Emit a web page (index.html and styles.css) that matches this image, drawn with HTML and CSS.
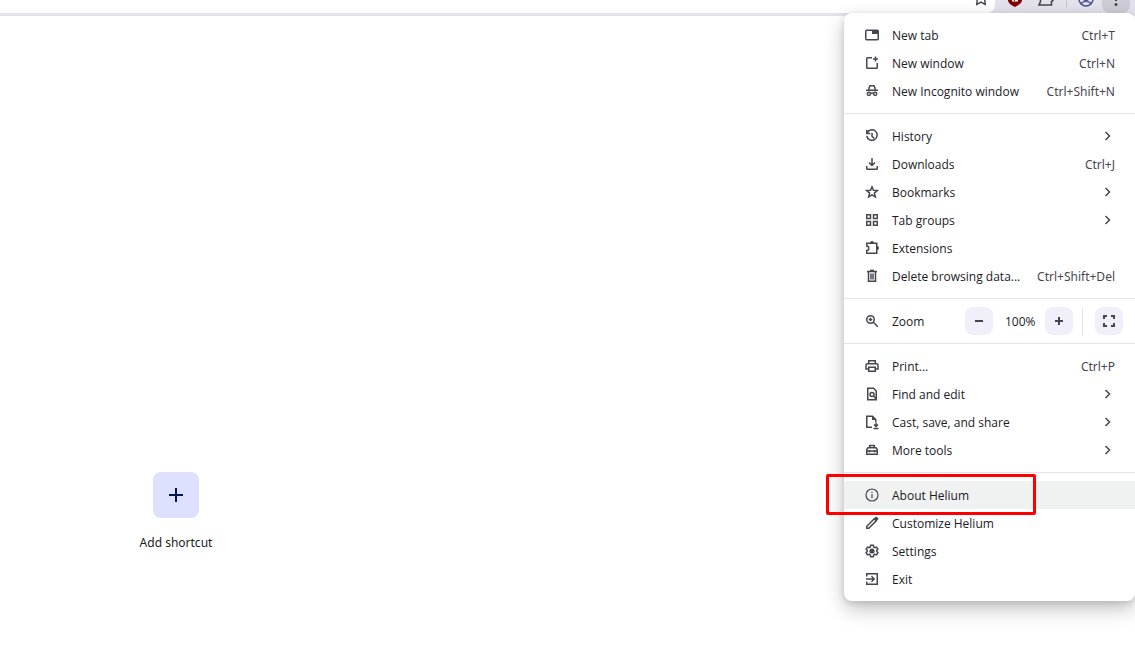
FILE: index.html
```html
<!DOCTYPE html>
<html lang="en">
<head>
    <meta charset="UTF-8">
    <meta name="viewport" content="width=device-width, initial-scale=1.0">
    <title>New Tab</title>
    <link rel="stylesheet" href="styles.css">
</head>
<body>

    <!-- Browser toolbar -->
    <header class="toolbar">
        <div class="address-bar">
            <button class="tool star" aria-label="Bookmark this tab">
                <svg width="14" height="16" viewBox="0 0 14 16"><path d="M3.200 0L2.800 4.300 7 2l4.200 2.300L10.800 0" fill="none" stroke="#46464f" stroke-width="1.500"/></svg>
            </button>
        </div>
        <div class="tools">
            <button class="tool blocker" aria-label="Content blocker">
                <svg width="16" height="16" viewBox="0 0 16 16"><path d="M1 0h14c0 3-3 5-7 7C4 5 1 3 1 0z" fill="#800000"/><path d="M5 0h2v1h1V0h3v1.500H5z" fill="#fff"/></svg>
            </button>
            <button class="tool" aria-label="Extensions">
                <svg width="18" height="16" viewBox="0 0 18 16"><path d="M3.500 0v1.500L2 5h12.500V1.500L16.500 0" fill="none" stroke="#46464f" stroke-width="1.600"/></svg>
            </button>
            <span class="tool-line"></span>
            <button class="tool" aria-label="Profile">
                <svg width="16" height="16" viewBox="0 0 16 16"><path d="M1 -1a7 7 0 0 0 14 0M3 3.500c3-2.800 7-2.800 10 0M5.500-1c1 2 4 2 5 0" fill="none" stroke="#4d4f8f" stroke-width="1.500"/></svg>
            </button>
            <button class="tool more" aria-label="Menu">
                <svg width="16" height="16" viewBox="0 0 16 16"><path d="M7 0h2v1H7z" fill="#46464f"/><circle cx="8" cy="4.500" r="1.500" fill="#46464f"/></svg>
            </button>
        </div>
    </header>

    <!-- New tab page -->
    <main class="page">
        <a class="shortcut" href="#">
            <span class="shortcut-tile">
                <svg width="24" height="24" viewBox="0 0 24 24"><path d="M12 5v14M5 12h14" stroke="#001452" stroke-width="2"/></svg>
            </span>
            <span>Add shortcut</span>
        </a>
    </main>

    <!-- App menu -->
    <nav class="menu">
        <button class="item">
            <svg class="icon" viewBox="0 0 16 16"><rect x="1.750" y="3.250" width="12.500" height="9.500" rx="1"/><path class="solid" d="M8 3h6v4H8z"/></svg>
            <span class="label">New tab</span><span class="keys">Ctrl+T</span>
        </button>
        <button class="item">
            <svg class="icon" viewBox="0 0 16 16"><path d="M8 2.750H3.500a.75.75 0 0 0-.75.75v9c0 .4.300.750.750.750h9c.4 0 .750-.3.750-.750V8M11.500 1.500v5M9 4h5"/></svg>
            <span class="label">New window</span><span class="keys">Ctrl+N</span>
        </button>
        <button class="item">
            <svg class="icon" viewBox="0 0 16 16"><path d="M2 7.250h12M5 7V5l1-2.250h4L11 5v2M6.500 10.500c.8-.6 2.200-.6 3 0"/><circle cx="4.900" cy="10.800" r="1.600"/><circle cx="11.100" cy="10.800" r="1.600"/></svg>
            <span class="label">New Incognito window</span><span class="keys">Ctrl+Shift+N</span>
        </button>

        <hr class="line">

        <button class="item">
            <svg class="icon" viewBox="0 0 16 16"><path d="M3 5.200A5.250 5.250 0 1 1 2.750 8M2.750 2v3.500h3.500M8 5v3.300l2.300 2.200"/></svg>
            <span class="label">History</span>
            <svg class="arrow" viewBox="0 0 14 14"><path d="M4.500 3l4 4-4 4"/></svg>
        </button>
        <button class="item">
            <svg class="icon" viewBox="0 0 16 16"><path d="M8 2v7M5 6.500l3 3 3-3M2.750 10v2.500c0 .4.300.750.750.750h9c.4 0 .750-.3.750-.750V10"/></svg>
            <span class="label">Downloads</span><span class="keys">Ctrl+J</span>
        </button>
        <button class="item">
            <svg class="icon" viewBox="0 0 16 16"><path d="M8 2.800l1.500 3.500 3.800.3-2.900 2.500.9 3.700L8 10.800l-3.300 2 .9-3.700-2.900-2.500 3.800-.3z"/></svg>
            <span class="label">Bookmarks</span>
            <svg class="arrow" viewBox="0 0 14 14"><path d="M4.500 3l4 4-4 4"/></svg>
        </button>
        <button class="item">
            <svg class="icon" viewBox="0 0 16 16"><path d="M2.750 2.750h3.750v3.750h-3.750zM9.500 2.750h3.750v3.750h-3.750zM2.750 9.500h3.750v3.750h-3.750zM9.500 9.500h3.750v3.750h-3.750z"/></svg>
            <span class="label">Tab groups</span>
            <svg class="arrow" viewBox="0 0 14 14"><path d="M4.500 3l4 4-4 4"/></svg>
        </button>
        <button class="item">
            <svg class="icon" viewBox="0 0 16 16"><path d="M2.750 6V3.250H12.750V13.250H2.750V10.500C5.500 10.500 5.500 6 2.750 6z"/><path class="solid" d="M6 3a2 2 0 0 1 4 0zM13 6a2 2 0 0 1 0 4z"/></svg>
            <span class="label">Extensions</span>
        </button>
        <button class="item">
            <svg class="icon" viewBox="0 0 16 16"><path d="M3 3.500h10M6 2.500h4M4.500 4v9.250h7V4M7 5.500v6M9 5.500v6"/></svg>
            <span class="label">Delete browsing data...</span><span class="keys">Ctrl+Shift+Del</span>
        </button>

        <hr class="line">

        <div class="item zoom">
            <svg class="icon" viewBox="0 0 16 16"><circle cx="6.500" cy="6.500" r="3.750"/><path d="M9.300 9.300l4.500 4.500M6.500 4.700v3.600M4.700 6.500h3.600"/></svg>
            <span class="label">Zoom</span>
            <button class="zoom-button" aria-label="Zoom out">
                <svg class="icon bold" viewBox="0 0 16 16"><path d="M4 8h8"/></svg>
            </button>
            <span class="zoom-value">100%</span>
            <button class="zoom-button" aria-label="Zoom in">
                <svg class="icon bold" viewBox="0 0 16 16"><path d="M4 8h8M8 4v8"/></svg>
            </button>
            <span class="zoom-line"></span>
            <button class="zoom-button" aria-label="Full screen">
                <svg class="icon bold" viewBox="0 0 16 16"><path d="M3 6V3h3M10 3h3v3M13 10v3h-3M6 13H3v-3"/></svg>
            </button>
        </div>

        <hr class="line">

        <button class="item">
            <svg class="icon" viewBox="0 0 16 16"><path d="M4.750 5.500V2.750h6.500V5.500M4.500 11H2V7.250c0-1 .5-1.500 1.500-1.500h9c1 0 1.500.5 1.500 1.500V11h-2.500M4.750 9.250h6.500v4h-6.500z"/></svg>
            <span class="label">Print...</span><span class="keys">Ctrl+P</span>
        </button>
        <button class="item">
            <svg class="icon" viewBox="0 0 16 16"><path d="M9.500 2.250H3.750v11.500h8.500V5zM9.800 10.200l2.200 2.500"/><circle cx="8" cy="8.500" r="2"/></svg>
            <span class="label">Find and edit</span>
            <svg class="arrow" viewBox="0 0 14 14"><path d="M4.500 3l4 4-4 4"/></svg>
        </button>
        <button class="item">
            <svg class="icon" viewBox="0 0 16 16"><path d="M8 13.250H2.750V2.250H8.500l3.250 3.250V8"/><path class="solid" d="M8 2l4 4H8z"/><path d="M12 8.500v4M10 10.500l2 2 2-2M9.500 14.500h5"/></svg>
            <span class="label">Cast, save, and share</span>
            <svg class="arrow" viewBox="0 0 14 14"><path d="M4.500 3l4 4-4 4"/></svg>
        </button>
        <button class="item">
            <svg class="icon" viewBox="0 0 16 16"><path d="M5.750 5.500V3.500h4.500v2M2.750 12.250V7.500l1.250-1.750h8l1.250 1.750v4.750zM2.750 9h10.500M5.500 8v2.500M10.500 8v2.500"/></svg>
            <span class="label">More tools</span>
            <svg class="arrow" viewBox="0 0 14 14"><path d="M4.500 3l4 4-4 4"/></svg>
        </button>

        <hr class="line">

        <button class="item active">
            <svg class="icon thin" viewBox="0 0 16 16"><circle cx="8" cy="8" r="6"/><path d="M8 7v4.200M8 4.700v1.400"/></svg>
            <span class="label">About Helium</span>
            <span class="highlight"></span>
        </button>
        <button class="item">
            <svg class="icon" viewBox="0 0 16 16"><path d="M2.750 13.250v-2l7.500-7.500 2 2-7.500 7.500z"/><path class="solid" d="M9.500 4l2-2c.5-.5 1-.5 1.500 0l1 1c.5.5.5 1 0 1.500l-2 2z"/></svg>
            <span class="label">Customize Helium</span>
        </button>
        <button class="item">
            <svg class="icon" viewBox="0 0 16 16"><path d="M6.700 2.200h2.600l.4 1.700 1.200.7 1.700-.5 1.300 2.200L12.700 7.500v1l1.200 1.200-1.300 2.200-1.700-.5-1.200.7-.4 1.700H6.700l-.4-1.700-1.200-.7-1.700.5-1.300-2.200L3.300 8.500v-1L2.100 6.300l1.300-2.200 1.700.5 1.200-.7z"/><circle class="solid" cx="8" cy="8" r="2.600"/></svg>
            <span class="label">Settings</span>
        </button>
        <button class="item">
            <svg class="icon" viewBox="0 0 16 16"><path d="M2.750 5.500V2.750h10.500v10.500H2.750V10.500M2 8h8M7.500 5.300L10.200 8l-2.700 2.700"/></svg>
            <span class="label">Exit</span>
        </button>
    </nav>

</body>
</html>
```

FILE: styles.css
```css
body {
    margin: 0;
    min-height: 100vh;
    background-color: #fff;
    color: #1b1b1f;
    font-family: "Open Sans", "Noto Sans", sans-serif;
    font-size: 12px;
    overflow: hidden;
}

button {
    font: inherit;
    color: inherit;
    background: none;
    border: 0;
    padding: 0;
}

svg {
    display: block;
}

/* Toolbar */
.toolbar {
    display: flex;
    height: 13px;
    background-color: #e4e3ed;
    border-bottom: 3px solid #e4e3ed;
}

.address-bar {
    flex: 1;
    display: flex;
    justify-content: flex-end;
    padding-right: 7px;
    background-color: #fff;
    border-bottom-right-radius: 8px;
}

.tools {
    display: flex;
    gap: 11px;
    padding: 0 5px 0 12px;
}

.tool {
    height: 13px;
    overflow: hidden;
}

.blocker {
    margin-right: 3px;
}

.tool-line {
    width: 1px;
    height: 7px;
    background-color: #c4c4d0;
}

.more {
    width: 28px;
    padding: 0 6px;
    margin-left: -3px;
    background-color: #cdccd7;
    border-radius: 0 0 8px 8px;
}

/* New tab page */
.page {
    display: flex;
    padding: 456px 0 0 136px;
}

.shortcut {
    display: flex;
    flex-direction: column;
    align-items: center;
    gap: 16px;
    width: 80px;
    font-family: "Noto Sans", sans-serif;
    line-height: 18px;
    white-space: nowrap;
    color: #1b1b1f;
    text-decoration: none;
}

.shortcut-tile {
    display: flex;
    align-items: center;
    justify-content: center;
    width: 46px;
    height: 46px;
    background-color: #dde1ff;
    border-radius: 8px;
}

/* App menu */
.menu {
    position: absolute;
    top: 13px;
    right: 0;
    width: 291px;
    box-sizing: border-box;
    padding: 8px 0;
    background-color: #fff;
    border-radius: 8px;
    box-shadow: 0 8px 20px rgba(0, 0, 0, 0.24), 0 2px 6px rgba(0, 0, 0, 0.12);
}

.item {
    position: relative;
    display: flex;
    align-items: center;
    gap: 12px;
    width: 100%;
    height: 28px;
    box-sizing: border-box;
    padding: 0 20px;
    text-align: left;
    white-space: nowrap;
}

.label {
    flex: 1;
}

.keys {
    font-family: "Noto Sans", sans-serif;
    color: #46464f;
}

.icon {
    width: 16px;
    height: 16px;
    fill: none;
    stroke: #46464f;
    stroke-width: 1.5;
}

.thin {
    stroke-width: 1.2;
}

.bold {
    stroke-width: 2;
}

.solid {
    fill: #46464f;
    stroke: none;
}

.arrow {
    width: 14px;
    height: 14px;
    fill: none;
    stroke: #46464f;
    stroke-width: 1.5;
}

.line {
    height: 1px;
    margin: 8px 0;
    border: 0;
    background-color: #e4e3ed;
}

.active {
    background-color: #f0f2f1;
}

/* Red frame around the About entry */
.highlight {
    position: absolute;
    top: -7px;
    left: -18px;
    width: 210px;
    height: 41px;
    box-sizing: border-box;
    border: 3px solid #fe0000;
    border-radius: 2px;
}

.zoom {
    padding-right: 12px;
}

.zoom-button {
    display: flex;
    align-items: center;
    justify-content: center;
    width: 28px;
    height: 28px;
    background-color: #f0effa;
    border-radius: 8px;
}

.zoom-value {
    width: 28px;
    text-align: center;
}

.zoom-line {
    width: 1px;
    height: 28px;
    margin-left: -3px;
    background-color: #e4e3ed;
}
```
